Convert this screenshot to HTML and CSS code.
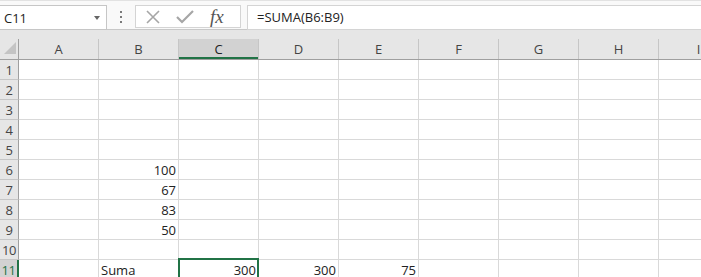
FILE: index.html
```html
<!DOCTYPE html>
<html lang="es">
<head>
    <meta charset="UTF-8">
    <title>Libro1 - Excel</title>
    <link rel="stylesheet" href="styles.css">
</head>
<body>
    <!-- Formula bar -->
    <div class="formula-bar">
        <div class="name-box">
            <span>C11</span>
            <span class="dropdown"></span>
        </div>
        <div class="grip"><i></i><i></i><i></i></div>
        <div class="fx-buttons">
            <svg class="icon" width="16" height="16" viewBox="0 0 16 16">
                <path d="M2 2 L14 14 M14 2 L2 14" stroke="#a6a6a6" stroke-width="1.6" fill="none"/>
            </svg>
            <svg class="icon" width="18" height="16" viewBox="0 0 18 16">
                <path d="M1 8 L6 13 L17 2" stroke="#a6a6a6" stroke-width="2.2" fill="none"/>
            </svg>
            <span class="fx">fx</span>
        </div>
        <div class="formula-input">=SUMA(B6:B9)</div>
    </div>

    <!-- Sheet -->
    <div class="sheet">
        <div class="col-heads">
            <div class="corner">
                <svg width="12" height="12" viewBox="0 0 12 12"><path d="M12 0 L12 12 L0 12 Z" fill="#c4c4c4"/></svg>
            </div>
            <div class="col-head">A</div>
            <div class="col-head">B</div>
            <div class="col-head active">C</div>
            <div class="col-head">D</div>
            <div class="col-head">E</div>
            <div class="col-head">F</div>
            <div class="col-head">G</div>
            <div class="col-head">H</div>
            <div class="col-head">I</div>
        </div>
        <div id="rows"></div>
    </div>

    <script>
        const data = {
            6: { B: "100" },
            7: { B: "67" },
            8: { B: "83" },
            9: { B: "50" },
            11: { B: "Suma", C: "300", D: "300", E: "75" }
        };
        const cols = ["A", "B", "C", "D", "E", "F", "G", "H", "I"];
        const rowsBox = document.getElementById("rows");

        for (let r = 1; r <= 11; r++) {
            const row = document.createElement("div");
            row.className = "row";

            const head = document.createElement("div");
            head.className = "row-head" + (r === 11 ? " active" : "");
            head.textContent = r;
            row.appendChild(head);

            cols.forEach((c) => {
                const cell = document.createElement("div");
                cell.className = "cell";
                const value = data[r] && data[r][c];
                if (value) {
                    cell.textContent = value;
                    if (isNaN(value)) cell.classList.add("text");
                }
                if (r === 11 && c === "C") cell.classList.add("selected");
                row.appendChild(cell);
            });
            rowsBox.appendChild(row);
        }
    </script>
</body>
</html>
```

FILE: styles.css
```css
body {
    margin: 0;
    font-family: "Open Sans", "Liberation Sans", sans-serif;
    font-size: 13px;
    color: #222;
    background: #fff;
    overflow: hidden;
}

/* Formula bar */
.formula-bar {
    display: flex;
    align-items: flex-start;
    height: 30px;
    padding-top: 4px;
    box-sizing: border-box;
    background: #f9f9f9;
    border-top: 1px solid #e2e2e2;
    border-bottom: 1px solid #c8c8c8;
}

.name-box {
    display: flex;
    align-items: center;
    justify-content: space-between;
    width: 96px;
    height: 23px;
    padding: 0 6px 0 4px;
    margin-left: -1px;
    background: #fff;
    border: 1px solid #c6c6c6;
}

.dropdown {
    width: 0;
    height: 0;
    border-left: 3px solid transparent;
    border-right: 3px solid transparent;
    border-top: 4px solid #666;
}

.grip {
    display: flex;
    flex-direction: column;
    gap: 3px;
    margin: 6px 13px 0 13px;
}

.grip i {
    display: block;
    width: 2px;
    height: 2px;
    background: #7a7a7a;
}

.fx-buttons {
    display: flex;
    align-items: center;
    gap: 15px;
    width: 106px;
    height: 23px;
    padding-left: 9px;
    box-sizing: border-box;
    background: #fff;
    border: 1px solid #d4d4d4;
}

.fx {
    font-family: "Liberation Serif", serif;
    font-style: italic;
    font-size: 19px;
    color: #555;
    margin-left: 1px;
}

.formula-input {
    flex: 1;
    height: 23px;
    line-height: 23px;
    margin-left: 6px;
    padding-left: 9px;
    background: #fff;
    border: 1px solid #d4d4d4;
    border-right: none;
}

/* Sheet */
.col-heads {
    display: flex;
    align-items: flex-end;
    height: 29px;
    background: #e6e6e6;
    border-bottom: 1px solid #9f9f9f;
}

.corner {
    flex: none;
    display: flex;
    align-items: flex-end;
    justify-content: flex-end;
    width: 16px;
    height: 15px;
    padding: 0 2px 5px 0;
    border-right: 1px solid #9f9f9f;
}

.col-head {
    flex: none;
    width: 79px;
    height: 20px;
    line-height: 20px;
    text-align: center;
    color: #444;
    border-right: 1px solid #c6c6c6;
}

.col-head.active {
    background: #d2d2d2;
    color: #222;
    box-shadow: inset 0 -2px 0 #217346;
}

.row {
    display: flex;
    height: 20px;
}

.row-head {
    flex: none;
    width: 18px;
    height: 19px;
    line-height: 21px;
    text-align: center;
    color: #444;
    background: #e6e6e6;
    border-right: 1px solid #9f9f9f;
    border-bottom: 1px solid #c6c6c6;
    letter-spacing: -0.5px;
}

.row-head.active {
    background: #d2d2d2;
    color: #217346;
    border-right: 2px solid #217346;
    width: 17px;
}

.cell {
    position: relative;
    flex: none;
    width: 75px;
    height: 19px;
    line-height: 21px;
    padding: 0 2px;
    text-align: right;
    white-space: nowrap;
    border-right: 1px solid #d9d9d9;
    border-bottom: 1px solid #d9d9d9;
}

.cell.text {
    text-align: left;
}

.cell.selected::after {
    content: "";
    position: absolute;
    top: -2px;
    left: -1px;
    right: -1px;
    bottom: -1px;
    border: 2px solid #217346;
}
```
